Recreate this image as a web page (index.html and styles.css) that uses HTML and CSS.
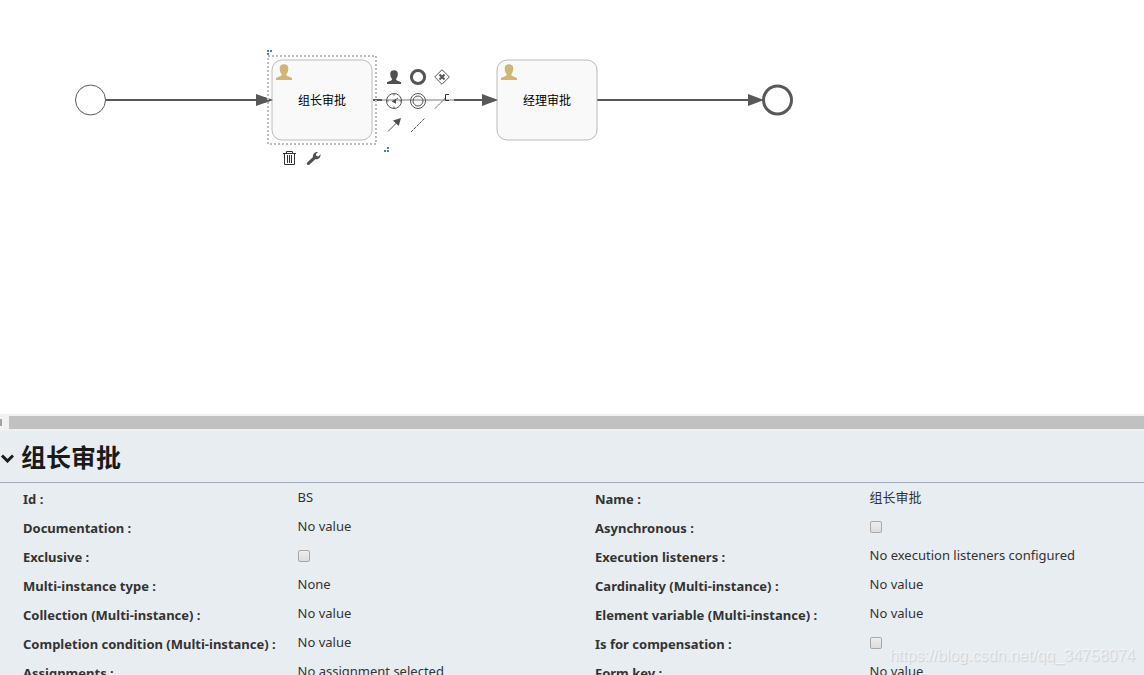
FILE: index.html
```html
<!DOCTYPE html>
<html lang="zh-CN">
<head>
<meta charset="utf-8">
<title>Process editor</title>
<link rel="stylesheet" href="styles.css">
</head>
<body>
<main class="canvas">
  <svg class="diagram" width="860" height="180">
    <defs>
      <path id="user" d="M0 16V14C2 12.400 5 12.600 5.600 11.200V10C4.300 8.600 3.700 6.400 3.700 4.400C3.700 1.400 5.400 .2 8 .2S12.300 1.400 12.300 4.400C12.300 6.400 11.700 8.600 10.400 10V11.200C11 12.600 14 12.400 16 14V16Z"/>
    </defs>
    <g class="flow">
      <path d="M106 100H258M373 100H484M597 100H750"/>
      <path class="flow-head" d="M256 94L273 100L256 106ZM482 94L498 100L482 106ZM748 94L764 100L748 106Z"/>
    </g>
    <circle class="event-start" cx="90.500" cy="100" r="15"/>
    <circle class="event-end" cx="777.500" cy="100" r="14"/>
    <rect class="task" x="272" y="60" width="100" height="80" rx="10"/>
    <rect class="task" x="497" y="60" width="100" height="80" rx="10"/>
    <path class="flow-head" d="M264 97L273 100L264 103ZM489 97L498 100L489 103Z"/>
    <use class="task-icon" href="#user" x="276" y="64"/>
    <use class="task-icon" href="#user" x="501" y="64"/>
    <text class="task-name" x="322" y="105">组长审批</text>
    <text class="task-name" x="547" y="105">经理审批</text>
    <rect class="selection" x="268" y="56" width="108" height="88"/>
    <path class="handle" d="M267 50h2v2h-2zM270 50h2v2h-2zM267 53h2v2h-2zM384 150h2v2h-2zM387 150h2v2h-2zM387 147h2v2h-2z"/>
  </svg>

  <div class="quick-menu">
    <button class="tool" type="button" aria-label="User task"><svg width="24" height="24"><use class="solid" href="#user" transform="translate(5 5) scale(.88)"/></svg></button>
    <button class="tool" type="button" aria-label="End event"><svg width="24" height="24"><circle class="line heavy" cx="12" cy="12" r="6.600"/></svg></button>
    <button class="tool" type="button" aria-label="Exclusive gateway"><svg width="24" height="24"><path class="line" d="M12 4.700L19.300 12L12 19.300L4.700 12Z"/><path class="line thick" d="M9.500 9.500L14.500 14.500M14.500 9.500L9.500 14.500"/></svg></button>
    <button class="tool" type="button" aria-label="Timer event"><svg width="24" height="24"><circle class="line" cx="12" cy="12" r="7.500"/><path class="line" d="M12 4V6.500M12 17.500V20M4 12H6.500M17.500 12H20M12 12L16 9"/><path class="solid" d="M9.500 12.500L14 9.800V14.800Z"/></svg></button>
    <button class="tool" type="button" aria-label="Intermediate event"><svg width="24" height="24"><circle class="line" cx="12" cy="12" r="7.500"/><circle class="line" cx="12" cy="12" r="5"/></svg></button>
    <button class="tool" type="button" aria-label="Text annotation"><svg width="24" height="24"><path class="line dashed" d="M5 19.500L15 9.500"/><path class="line dark" d="M19 5.500H15.500V11.500H19"/></svg></button>
    <button class="tool" type="button" aria-label="Sequence flow"><svg width="24" height="24"><path class="line" d="M6 18.500L15 9.500"/><path class="solid" d="M19 5L16.700 13L11 7.500Z"/></svg></button>
    <button class="tool" type="button" aria-label="Association"><svg width="24" height="24"><path class="line dashed" d="M5 19L19 5"/></svg></button>
  </div>

  <div class="edit-menu">
    <button class="tool" type="button" aria-label="Delete"><svg width="24" height="24"><path class="line dark" d="M6 7.500H19M9.500 7V5.500H15.500V7M7.500 7.500V18.500H17.500V7.500M10.500 9V17M12.500 9V17M14.500 9V17"/></svg></button>
    <button class="tool" type="button" aria-label="Change type"><svg width="24" height="24"><path class="solid" d="M6 16.700L12 11C11.400 8.500 13.500 5.500 17 6L14.800 8.200L15.500 10L17.300 10.500L19.500 8.300C20 11.700 17 13.800 14.300 13.200L8.300 18.700C6.800 19.700 5 18 6 16.700Z"/></svg></button>
  </div>
</main>

<div class="scrollbar"><span class="scroll-arrow"></span><span class="thumb"></span></div>

<section class="panel">
  <h1 class="panel-title"><svg class="chevron" width="14" height="12"><path d="M2 4.500L7.500 10L13 4.500"/></svg>组长审批</h1>
  <dl class="properties">
    <div class="property"><dt>Id :</dt><dd>BS</dd></div>
    <div class="property"><dt>Name :</dt><dd>组长审批</dd></div>
    <div class="property"><dt>Documentation :</dt><dd>No value</dd></div>
    <div class="property"><dt><label for="async">Asynchronous :</label></dt><dd><input class="check" type="checkbox" id="async"></dd></div>
    <div class="property"><dt><label for="exclusive">Exclusive :</label></dt><dd><input class="check" type="checkbox" id="exclusive"></dd></div>
    <div class="property"><dt>Execution listeners :</dt><dd>No execution listeners configured</dd></div>
    <div class="property"><dt>Multi-instance type :</dt><dd>None</dd></div>
    <div class="property"><dt>Cardinality (Multi-instance) :</dt><dd>No value</dd></div>
    <div class="property"><dt>Collection (Multi-instance) :</dt><dd>No value</dd></div>
    <div class="property"><dt>Element variable (Multi-instance) :</dt><dd>No value</dd></div>
    <div class="property"><dt>Completion condition (Multi-instance) :</dt><dd>No value</dd></div>
    <div class="property"><dt><label for="compensation">Is for compensation :</label></dt><dd><input class="check" type="checkbox" id="compensation"></dd></div>
    <div class="property"><dt>Assignments :</dt><dd>No assignment selected</dd></div>
    <div class="property"><dt>Form key :</dt><dd>No value</dd></div>
  </dl>
</section>
<div class="watermark">https://blog.csdn.net/qq_34758074</div>
</body>
</html>
```
FILE: styles.css
```css
* { box-sizing: border-box; }
body {
  margin: 0;
  height: 100vh;
  display: grid;
  grid-template-rows: minmax(0, 207fr) 17px minmax(0, 122fr);
  overflow: hidden;
  position: relative;
  background: #fff;
  color: #333;
  font: 13px/20px "Noto Sans", "Noto Sans CJK SC", sans-serif;
}
.canvas { position: relative; overflow: hidden; }
.diagram { display: block; }
.flow { fill: none; stroke: #585858; stroke-width: 2; }
.flow-head { fill: #585858; stroke: none; }
.event-start { fill: #fff; stroke: #585858; stroke-width: 1; }
.event-end { fill: #fff; stroke: #585858; stroke-width: 3; }
.task { fill: #f9f9f9; stroke: #bbb; stroke-width: 1; }
.task-icon { fill: #d1b575; }
.task-name { font-size: 12px; fill: #000; text-anchor: middle; }
.selection { fill: none; stroke: #bbb; stroke-width: 2; stroke-dasharray: 2 2; }
.handle { fill: #4a7ebb; }

.quick-menu, .edit-menu { position: absolute; display: grid; }
.quick-menu {
  left: 382px;
  top: 65px;
  grid-template-columns: repeat(3, 24px);
  background: rgba(255, 255, 255, 0.6);
}
.edit-menu { left: 277px; top: 146px; grid-template-columns: repeat(2, 24px); }
.tool {
  width: 24px;
  height: 24px;
  padding: 0;
  border: 0;
  background: none;
}
.tool svg { display: block; }
.line { fill: none; stroke: #555; stroke-width: 1; }
.dark { stroke: #333; }
.thick { stroke-width: 2; }
.heavy { stroke-width: 3; }
.dashed { stroke-dasharray: 3 1; }
.solid { fill: #505050; }

.scrollbar {
  display: flex;
  align-items: center;
  background: #f1f1f1;
}
.scroll-arrow {
  width: 2px;
  height: 7px;
  margin-right: 7px;
  background: #a3a3a3;
}
.thumb { flex: 1; height: 13px; background: #c1c1c1; }

.panel { background: #e8edf1; overflow: hidden; }
.panel-title {
  display: flex;
  align-items: center;
  gap: 7px;
  height: 52px;
  margin: 0;
  border-bottom: 1px solid #a4abbe;
  color: #1a1a1a;
  font-size: 25px;
  line-height: 50px;
}
.chevron { fill: none; stroke: #1a1a1a; stroke-width: 3; }
.properties {
  display: grid;
  grid-template-columns: 1fr 1fr;
  margin: 0;
  padding-top: 4px;
}
.property {
  display: grid;
  grid-template-columns: 48% 1fr;
  height: 29px;
  white-space: nowrap;
}
.property dt { padding: 2px 0 0 23px; font-weight: bold; }
.property dd { margin: 0; padding-left: 23px; }
.check {
  appearance: none;
  display: block;
  width: 12px;
  height: 12px;
  margin: 5px 0 0;
  border: 1px solid #a8a8a8;
  border-radius: 2px;
  background: linear-gradient(#eee, #dcdcdc);
}
.watermark {
  position: absolute;
  right: 9px;
  bottom: 9px;
  color: rgba(255, 255, 255, 0.5);
  font-family: "Liberation Sans", Arial, sans-serif;
  font-size: 16px;
  text-shadow: 1px 1px 1px rgba(0, 0, 0, 0.12);
}
```
